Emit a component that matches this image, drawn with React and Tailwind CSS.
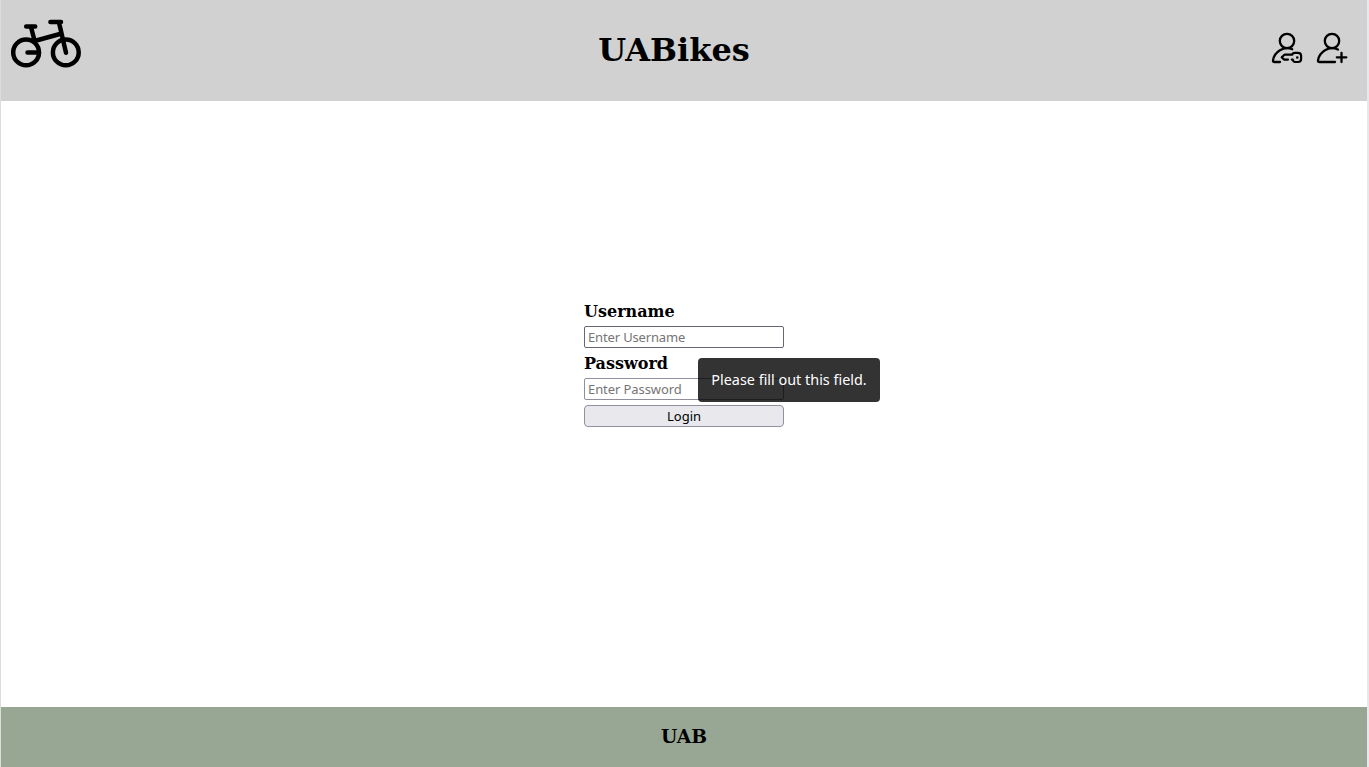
function Bike() {
  return (
    <svg className="h-[70px] w-[70px]" viewBox="0 0 70 70" fill="none" stroke="#000" strokeWidth="4.5" strokeLinecap="round" strokeLinejoin="round">
      <circle cx="15.1" cy="42.4" r="12.9" />
      <circle cx="54.8" cy="42.4" r="12.9" />
      <path d="M16.5 42.5H28M15.2 16.4H24.2M20 17L23.5 30.5M23.5 31L49 24M39.4 12.1H50M48 12.5L55 42.8" />
    </svg>
  );
}

function UserKey() {
  return (
    <svg className="h-8 w-8" viewBox="0 0 32 32" fill="none" stroke="#000" strokeWidth="2.3" strokeLinecap="round" strokeLinejoin="round">
      <circle cx="16" cy="9" r="7.2" />
      <path d="M21.2 17.2C13 13.5 3 20 2 28.5Q1.8 30 3.5 30H9" />
      <path d="M21.3 22.7H13.5L10.7 25.2L13 27.6H17M21.3 22.7Q21.5 20.9 24 20.9H27Q30.1 20.9 30.1 23.8V27Q30.1 30 27 30H24.3Q22.3 30 21.8 27.6H20.8" strokeWidth="2.2" />
      <circle cx="26.3" cy="25.5" r="0.7" strokeWidth="1.2" />
    </svg>
  );
}

function UserPlus() {
  return (
    <svg className="h-8 w-8" viewBox="0 0 32 32" fill="none" stroke="#000" strokeWidth="2.3" strokeLinecap="round" strokeLinejoin="round">
      <circle cx="16" cy="9" r="7.2" />
      <path d="M22 17.6C13 13 3 20 2 28.5Q1.8 30 3.5 30H19M20.8 25.3H30.3M25.5 20.8V30" />
    </svg>
  );
}

export default function App() {
  return (
    <div className="flex h-[767px] w-[1369px] flex-col overflow-hidden border-r-2 border-l border-r-[#e8e8ea] border-l-[#dcdcdc] bg-white font-['DejaVu_Serif',serif] text-black">
      <header className="flex h-[101px] shrink-0 items-start justify-between bg-[#d1d1d1] pr-[19px] pl-[10px]">
        <div className="w-20 pt-[10px]"><Bike /></div>
        <h1 className="pt-[26px] pr-[14px] text-[32px] leading-[48px] font-bold">UABikes</h1>
        <nav className="flex gap-[13px] pt-8">
          <UserKey />
          <UserPlus />
        </nav>
      </header>
      <main className="flex flex-1 justify-center pt-[199px]">
        <form className="relative flex w-[200px] flex-col" noValidate>
          <label htmlFor="username" className="mt-0.5 mb-1 h-5 text-base leading-5 font-bold">Username</label>
          <input id="username" placeholder="Enter Username" className="h-[22px] rounded-[2px] border border-[#676774] px-[3px] font-['Noto_Sans',sans-serif] text-[13px] tracking-[-0.15px] text-black placeholder:text-[#757575]" />
          <label htmlFor="password" className="mt-[6px] mb-1 h-5 text-base leading-5 font-bold">Password</label>
          <input id="password" type="password" placeholder="Enter Password" className="h-[22px] rounded-[2px] border border-[#8f8f9d] px-[3px] font-['Noto_Sans',sans-serif] text-[13px] tracking-[-0.08px] text-black placeholder:text-[#757575]" />
          <button type="button" className="mt-[5px] flex h-[22px] items-center justify-center rounded-[4px] border border-[#8f8f9d] bg-[#e9e9ed] font-['Noto_Sans',sans-serif] text-[13px] leading-5">Login</button>
          <div role="tooltip" className="absolute top-[58px] left-[114px] flex h-11 w-[182px] items-center justify-center rounded-[4px] bg-black/80 font-['Noto_Sans',sans-serif] text-[14.4px] whitespace-nowrap text-white">Please fill out this field.</div>
        </form>
      </main>
      <footer className="flex h-[60px] shrink-0 items-center justify-center bg-[#98a794] pb-0.5">
        <h3 className="text-[18.72px] leading-6 font-bold">UAB</h3>
      </footer>
    </div>
  );
}
